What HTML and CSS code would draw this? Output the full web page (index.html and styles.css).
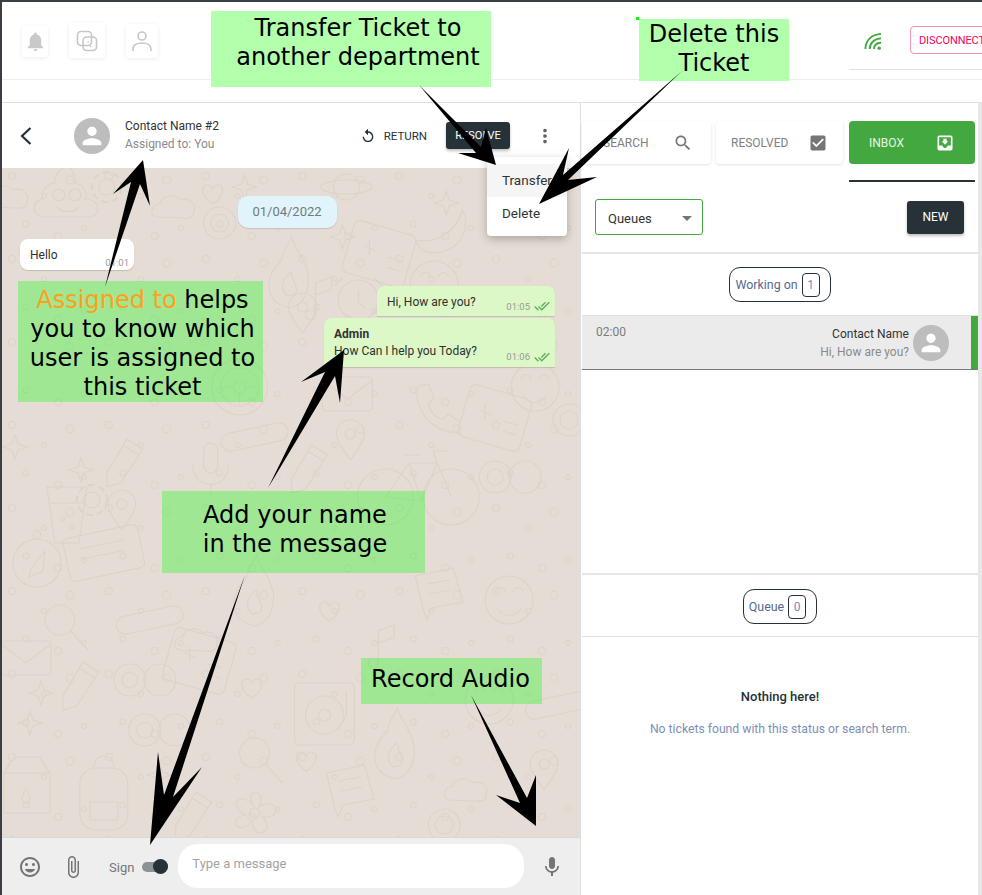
FILE: index.html
```html
<!DOCTYPE html>
<html lang="en">
<head>
<meta charset="utf-8">
<title>Ticket</title>
<link rel="stylesheet" href="styles.css">
</head>
<body>
<div class="app">
  <header class="topbar">
    <div class="top-icons">
      <span class="card card-bell"><svg class="ic-bell" viewBox="0 0 24 24"><path d="M12 22c1.100 0 2-.9 2-2h-4c0 1.100.89 2 2 2zm6-6v-5c0-3.070-1.640-5.640-4.500-6.320V4c0-.83-.67-1.500-1.500-1.500s-1.500.67-1.500 1.500v.68C7.630 5.360 6 7.920 6 11v5l-2 2v1h16v-1l-2-2z"/></svg></span>
      <span class="card card-copy"><svg class="ic-line" viewBox="0 0 24 24"><rect x="2.500" y="2.500" width="14" height="14" rx="3.500"/><rect x="8" y="8" width="13.500" height="13.500" rx="3.500"/><path d="M13 12.500v1M15 17l1 1"/></svg></span>
      <span class="card card-user"><svg class="ic-line" viewBox="0 0 24 24"><circle cx="12" cy="7" r="4"/><path d="M3 22v-2c0-4 4-6 9-6s9 2 9 6v2"/></svg></span>
    </div>
    <div class="top-right">
      <svg class="ic-signal" viewBox="0 0 20 20"><path d="M1.500 18C1.500 9 8 2.500 18 2"/><path d="M6 18c0-6.500 5-11 12-11.200"/><path d="M10.500 18c0-4 3-6.500 7.500-6.700"/><circle cx="16" cy="17" r="1.800"/></svg>
      <button class="btn-disconnect">DISCONNECT</button>
    </div>
  </header>

  <main class="main">
    <section class="chat">
      <div class="chat-head">
        <svg class="ic-back" viewBox="0 0 14 20"><path d="M11.500 2L3 10l8.500 8"/></svg>
        <span class="avatar"><svg viewBox="0 0 24 24"><path d="M12 12c2.210 0 4-1.790 4-4s-1.790-4-4-4-4 1.790-4 4 1.790 4 4 4zm0 2c-2.670 0-8 1.340-8 4v2h16v-2c0-2.660-5.330-4-8-4z"/></svg></span>
        <div class="who">
          <div class="who-name">Contact Name #2</div>
          <div class="who-sub">Assigned to: You</div>
        </div>
        <div class="head-actions">
          <svg class="ic-return" viewBox="0 0 24 24"><path d="M12 5V1L7 6l5 5V7c3.310 0 6 2.690 6 6s-2.690 6-6 6-6-2.690-6-6H4c0 4.420 3.580 8 8 8s8-3.580 8-8-3.580-8-8-8z"/></svg>
          <span class="return-label">RETURN</span>
          <button class="btn-dark btn-resolve">RESOLVE</button>
          <svg class="ic-more" viewBox="0 0 24 24"><path d="M12 8c1.100 0 2-.9 2-2s-.9-2-2-2-2 .9-2 2 .9 2 2 2zm0 2c-1.100 0-2 .9-2 2s.9 2 2 2 2-.9 2-2-.9-2-2-2zm0 6c-1.100 0-2 .9-2 2s.9 2 2 2 2-.9 2-2-.9-2-2-2z"/></svg>
        </div>
      </div>

      <div class="chat-body">
        <svg class="wallpaper" viewBox="2 168 579 669" preserveAspectRatio="none">
          <defs>
            <pattern id="dots" width="97" height="83" patternUnits="userSpaceOnUse">
              <circle cx="12" cy="10" r="3.500"/><circle cx="44" cy="30" r="2.500"/><circle cx="70" cy="14" r="4"/><circle cx="26" cy="58" r="3"/><circle cx="84" cy="62" r="2.500"/><circle cx="58" cy="70" r="3.500"/>
            </pattern>
            <path id="star" d="M0-12 3-3 12 0 3 3 0 12-3 3-12 0-3-3Z"/>
            <path id="heart" d="M0 11C-14 2-11-9-4-8-2-8-1-6 0-4 1-6 2-8 4-8 11-9 14 2 0 11Z"/>
            <g id="circ"><circle r="16"/><circle r="9"/></g>
            <path id="cloud" d="M-20 10C-28 8-26-3-17-3-15-12-2-14 3-7 12-10 20-4 17 4 18 10 12 12 6 11Z"/>
            <g id="planet"><circle r="13"/><ellipse rx="26" ry="7"/></g>
            <path id="banana" d="M-26 8C-8 12 14 2 20-22 28-8 22 14 0 20-14 23-24 18-26 8Z"/>
            <g id="envelope"><rect x="-25" y="-16" width="50" height="34" rx="4"/><path d="M-25-13 0 6 25-13"/></g>
            <g id="bike"><circle cx="-32" cy="10" r="28"/><circle cx="34" cy="10" r="28"/><path d="M-32 10-8-24 20-24 34 10M-8-24 4 14-32 10M4 14 20-24M-14-32H2M20-24 16-36H30"/></g>
            <g id="player"><rect x="-30" y="-30" width="60" height="62" rx="5"/><circle cy="2" r="19"/><circle cy="2" r="6"/><path d="M22-22V2L14 16"/></g>
            <g id="pack"><rect x="-24" y="-22" width="48" height="62" rx="16"/><path d="M-10-22C-10-38 10-38 10-22M-14 12H14V30H-14Z"/></g>
            <g id="milk"><path d="M-22-10-12-26H14L24-10V30H-22ZM-22-10H24"/><path d="M0 6C-6 14-4 20 0 20S6 14 0 6Z"/></g>
            <g id="flower"><path d="M0-6C-14-26 14-26 4-6 22-18 30 6 8 4 22 20-2 28-3 8-14 24-30 6-9 2-28-8-14-24 0-6Z"/><circle r="5"/></g>
            <g id="pencil"><path d="M-26 16-6-18 10-8-12 26-26 30ZM-10-12 6-2"/></g>
            <g id="mic"><rect x="-7" y="-24" width="14" height="30" rx="7"/><path d="M-18-2C-18 24 18 24 18-2M0 16V30"/></g>
            <g id="phone"><path d="M-14-24-4-26 2-12-4-6C-2 2 4 8 10 10L16 4 28 12 26 22C8 26-22 2-14-24Z"/></g>
            <g id="face"><circle r="24"/><path d="M-12 8C-6 18 6 18 12 8M-14-8C-12-14-6-14-4-8M4-8C6-14 12-14 14-8"/></g>
            <g id="gear"><circle r="8"/><circle r="15" stroke-dasharray="7 4" stroke-width="2"/></g>
            <g id="note"><path d="M-6 18V-14L10-20V-8L-6-2"/><circle cx="-11" cy="18" r="5"/></g>
            <g id="clock"><circle r="20"/><path d="M0-10V2L7 8M-16-22-24-14M16-22 24-14"/></g>
            <g id="pin"><path d="M0 20C-12 4-14-2-14-6A14 14 0 0 1 14-6C14-2 12 4 0 20Z"/><circle cy="-6" r="5"/></g>
            <g id="band"><rect x="-34" y="-9" width="68" height="18" rx="9" transform="rotate(-12)"/><path d="M-18 2h1M-6 0h1M6-2h1M18-4h1"/></g>
            <g id="mag"><circle r="15"/><path d="M11 11 28 30"/></g>
            <g id="cup"><path d="M-20-26H20L12 30H-12ZM-18-10H18"/><circle cx="-4" cy="6" r="2"/><circle cx="5" cy="14" r="2"/></g>
            <g id="wheel"><circle r="28"/><circle r="19"/><circle r="6"/><path d="M-6 0H-19M6 0H19M0 6V19"/></g>
            <g id="card"><rect x="-38" y="-22" width="76" height="44" rx="5" transform="rotate(-12)"/><path d="M-24-4 20-13M-22 6 22-3"/></g>
            <g id="chatb"><path d="M-24-14 14-22 24 12-8 18-12 30-16 20Z"/><path d="M-12-6 10-10M-10 4 12 0"/></g>
            <g id="compass"><circle r="24"/><circle cy="-28" r="4"/><path d="M-6 6 8-12 6 8-8 14Z"/></g>
            <g id="goggles"><circle cx="-14" r="16"/><circle cx="16" r="16"/><circle cx="-14" r="8"/></g>
            <g id="flame"><path d="M0 36C-26 30-26 6-8-12-6-26 2-30 2-36 4-22 24-6 18 16 16 28 8 34 0 36Z"/><path d="M-2 24C-10 18-8 6 2 0 2 10 10 14 6 22Z"/></g>
            <g id="box"><rect x="-32" y="-26" width="64" height="54" rx="6" transform="rotate(16)"/><path d="M-16-8-4-2M-10-14-10 2M8 4 22 8M8 14 20 18"/></g>
            <g id="poop"><path d="M-26 20C-38 14-32 2-24 2-28-8-16-14-12-14-14-24-4-28 2-34 4-26 10-22 8-14 18-12 22-2 18 2 34 2 34 18 24 20Z"/><circle cx="-8" cy="-2" r="6"/><circle cx="8" cy="-2" r="6"/><path d="M-10 10C-4 16 6 16 12 10"/></g>
          </defs>
          <rect class="wp-dots" x="2" y="168" width="579" height="669"/>
          <g class="wp-lines">
            <use href="#poop" x="67" y="197"/><use href="#cloud" x="10" y="197"/><use href="#gear" x="107" y="187"/><use href="#cloud" x="177" y="207"/><use href="#heart" x="213" y="193"/><use href="#star" x="245" y="187"/><use href="#planet" x="347" y="187"/><use href="#star" x="447" y="203"/><use href="#banana" x="443" y="232"/><use href="#circ" x="220" y="223"/><use href="#star" x="343" y="237"/><use href="#box" x="380" y="253"/>
            <use href="#flame" x="290" y="272"/><use href="#face" x="435" y="285"/><use href="#note" x="322" y="297"/><use href="#clock" x="359" y="300"/><use href="#pin" x="303" y="313"/><use href="#wheel" x="240" y="387"/><use href="#envelope" x="348" y="393"/><use href="#phone" x="433" y="410"/><use href="#face" x="536" y="387"/><use href="#box" x="496" y="417"/><use href="#circ" x="570" y="420"/><use href="#band" x="255" y="437"/><use href="#pin" x="351" y="440"/><use href="#pencil" x="133" y="457"/><use href="#pencil" x="318" y="463"/><use href="#mic" x="211" y="467"/><use href="#bike" x="418" y="487"/><use href="#goggles" x="510" y="477"/><use href="#star" x="81" y="470"/><use href="#star" x="15" y="447"/><use href="#cup" x="67" y="513"/><use href="#gear" x="92" y="500"/><use href="#pin" x="122" y="510"/><use href="#compass" x="37" y="563"/><use href="#card" x="104" y="553"/><use href="#flame" x="255" y="590"/><use href="#chatb" x="440" y="590"/><use href="#heart" x="330" y="610"/><use href="#face" x="510" y="600"/><use href="#band" x="150" y="620"/><use href="#mag" x="60" y="620"/><use href="#note" x="385" y="645"/><use href="#cloud" x="200" y="640"/><use href="#envelope" x="26" y="657"/><use href="#pencil" x="89" y="680"/><use href="#goggles" x="144" y="680"/><use href="#box" x="200" y="660"/><use href="#heart" x="252" y="687"/><use href="#player" x="325" y="713"/><use href="#star" x="41" y="693"/><use href="#star" x="30" y="723"/><use href="#flame" x="396" y="743"/><use href="#goggles" x="159" y="730"/><use href="#milk" x="26" y="783"/><use href="#pack" x="104" y="790"/><use href="#mag" x="255" y="753"/><use href="#heart" x="307" y="760"/><use href="#chatb" x="351" y="787"/><use href="#flower" x="255" y="813"/><use href="#pencil" x="202" y="810"/><use href="#pin" x="545" y="770"/><use href="#face" x="490" y="700"/><use href="#band" x="560" y="705"/><use href="#cloud" x="470" y="790"/><use href="#circ" x="445" y="825"/><use href="#star" x="160" y="775"/>
          </g>
        </svg>

        <div class="date-chip">01/04/2022</div>
        <div class="bubble bubble-in"><span>Hello</span><time class="stamp">01:01</time></div>
        <div class="bubble bubble-out bubble-one">
          <span>Hi, How are you?</span>
          <span class="meta"><time>01:05</time><svg class="ic-done" viewBox="0 0 24 24"><path d="M18 7l-1.410-1.410-6.340 6.340 1.410 1.410L18 7zm4.240-1.410L11.660 16.170 7.480 12l-1.410 1.410L11.660 19l12-12-1.420-1.410zM.41 13.410L6 19l1.410-1.410L1.830 12 .41 13.410z"/></svg></span>
        </div>
        <div class="bubble bubble-out bubble-two">
          <strong class="sender">Admin</strong>
          <span>How Can I help you Today?</span>
          <span class="meta"><time>01:06</time><svg class="ic-done" viewBox="0 0 24 24"><path d="M18 7l-1.410-1.410-6.340 6.340 1.410 1.410L18 7zm4.240-1.410L11.660 16.170 7.480 12l-1.410 1.410L11.660 19l12-12-1.420-1.410zM.41 13.410L6 19l1.410-1.410L1.830 12 .41 13.410z"/></svg></span>
        </div>
      </div>

      <footer class="composer">
        <svg class="ic-foot" viewBox="0 0 24 24"><path d="M11.990 2C6.470 2 2 6.480 2 12s4.470 10 9.990 10C17.520 22 22 17.520 22 12S17.520 2 11.990 2zM12 20c-4.420 0-8-3.580-8-8s3.580-8 8-8 8 3.580 8 8-3.580 8-8 8zm3.500-9c.83 0 1.500-.67 1.500-1.500S16.330 8 15.500 8 14 8.670 14 9.500s.67 1.500 1.500 1.500zm-7 0c.83 0 1.500-.67 1.500-1.500S9.330 8 8.500 8 7 8.670 7 9.500 7.670 11 8.500 11zm3.500 6.500c2.330 0 4.310-1.460 5.110-3.500H6.890c.8 2.040 2.780 3.500 5.110 3.500z"/></svg>
        <svg class="ic-foot ic-clip" viewBox="0 0 24 24"><path d="M16.500 6v11.500c0 2.210-1.790 4-4 4s-4-1.790-4-4V5c0-1.380 1.120-2.500 2.500-2.500s2.500 1.120 2.500 2.500v10.500c0 .55-.45 1-1 1s-1-.45-1-1V6H10v9.500c0 1.380 1.120 2.500 2.500 2.500s2.500-1.120 2.500-2.500V5c0-2.210-1.790-4-4-4S7 2.790 7 5v12.500c0 3.040 2.460 5.500 5.500 5.500s5.500-2.460 5.500-5.500V6h-1.500z"/></svg>
        <span class="sign">Sign</span>
        <span class="switch"><span class="switch-knob"></span></span>
        <div class="msg-input">Type a message</div>
        <svg class="ic-foot ic-mic" viewBox="0 0 24 24"><path d="M12 14c1.660 0 2.990-1.340 2.990-3L15 5c0-1.660-1.340-3-3-3S9 3.340 9 5v6c0 1.660 1.340 3 3 3zm5.300-3c0 3-2.540 5.100-5.300 5.100S6.700 14 6.700 11H5c0 3.410 2.720 6.230 6 6.720V21h2v-3.280c3.280-.48 6-3.300 6-6.720h-1.700z"/></svg>
      </footer>
    </section>

    <aside class="panel">
      <div class="tabs">
        <div class="tab tab-search"><span>SEARCH</span><svg viewBox="0 0 24 24"><path d="M15.500 14h-.79l-.28-.27C15.410 12.590 16 11.110 16 9.500 16 5.910 13.090 3 9.500 3S3 5.910 3 9.500 5.910 16 9.500 16c1.610 0 3.090-.59 4.230-1.570l.27.28v.79l5 4.990L20.490 19l-4.990-5zm-6 0C7.010 14 5 11.990 5 9.500S7.010 5 9.500 5 14 7.010 14 9.500 11.990 14 9.500 14z"/></svg></div>
        <div class="tab tab-resolved"><span>RESOLVED</span><svg viewBox="0 0 24 24"><path d="M19 3H5c-1.110 0-2 .9-2 2v14c0 1.100.89 2 2 2h14c1.110 0 2-.9 2-2V5c0-1.100-.89-2-2-2zm-9 14l-5-5 1.410-1.410L10 14.170l7.590-7.590L19 8l-9 9z"/></svg></div>
        <div class="tab tab-inbox"><span>INBOX</span><svg viewBox="0 0 24 24"><path d="M19 3H4.990c-1.110 0-1.980.9-1.980 2L3 19c0 1.100.88 2 1.990 2H19c1.100 0 2-.9 2-2V5c0-1.100-.9-2-2-2zm0 12h-4c0 1.660-1.350 3-3 3s-3-1.340-3-3H4.990V5H19v10zm-3-5h-2V7h-4v3H8l4 4 4-4z"/></svg></div>
      </div>
      <div class="tab-rule"></div>
      <div class="filters">
        <div class="select"><span>Queues</span><i class="caret"></i></div>
        <button class="btn-dark btn-new">NEW</button>
      </div>

      <div class="list-working">
        <div class="list-title list-title-work"><div class="pill">Working on <b class="count">1</b></div></div>
        <div class="ticket">
          <span class="ticket-time">02:00</span>
          <div class="ticket-text">
            <div class="ticket-name">Contact Name</div>
            <div class="ticket-msg">Hi, How are you?</div>
          </div>
          <span class="avatar"><svg viewBox="0 0 24 24"><path d="M12 12c2.210 0 4-1.790 4-4s-1.790-4-4-4-4 1.790-4 4 1.790 4 4 4zm0 2c-2.670 0-8 1.340-8 4v2h16v-2c0-2.660-5.330-4-8-4z"/></svg></span>
        </div>
      </div>

      <div class="list-queue">
        <div class="list-title list-title-ruled"><div class="pill">Queue <b class="count">0</b></div></div>
        <div class="empty">
          <div class="empty-title">Nothing here!</div>
          <div class="empty-sub">No tickets found with this status or search term.</div>
        </div>
      </div>
    </aside>
  </main>

  <div class="menu">
    <div class="menu-item menu-active">Transfer</div>
    <div class="menu-item">Delete</div>
  </div>

  <div class="note note-transfer"><span>Transfer Ticket to<br>another department</span></div>
  <div class="note note-delete"><span>Delete this<br>Ticket</span></div>
  <div class="note note-assigned"><span><em>Assigned to</em> helps<br>you to know which<br>user is assigned to<br>this ticket</span></div>
  <div class="note note-name"><span>Add your name<br>in the message</span></div>
  <div class="note note-audio"><span>Record Audio</span></div>
  <i class="speck"></i>

  <svg class="arrows" viewBox="0 0 982 895">
    <polygon points="143,160 113,194 131,182 105,287 140,184 150,206"/>
    <polygon points="496,165 458,153 476,153 419,85 481,147 486,128"/>
    <polygon points="539,204 569,148 563,175 682,71 568,180 597,177"/>
    <polygon points="344,350 301,382 325,372 268,488 335,376 340,403"/>
    <polygon points="150,845 158,752 164,795 245,575 173,797 202,767"/>
    <polygon points="536,826 496,795 520,803 471,695 527,798 536,775"/>
  </svg>
</div>
</body>
</html>
```

FILE: styles.css
```css
* { box-sizing: border-box; }
html, body { margin: 0; height: 100%; }
body { background: #fff; font-family: "Roboto", "Liberation Sans", sans-serif; color: #263238; overflow: hidden; }
.app { position: relative; width: 982px; height: 895px; overflow: hidden; border-top: 2px solid #3a3f45; border-left: 2px solid #3a3f45; background: #fff; }

/* top bar */
.topbar { display: flex; justify-content: space-between; height: 78px; border-bottom: 1px solid #eeeeee; }
.top-icons { display: flex; align-items: flex-start; padding: 21px 0 0 20px; }
.card { display: flex; align-items: center; justify-content: center; border-radius: 3px; background: #fff; box-shadow: 0 1px 4px rgba(0,0,0,.08); }
.card-bell { width: 26px; height: 31px; margin-top: 3px; }
.card-copy { width: 36px; height: 35px; margin-left: 21px; }
.card-user { width: 32px; height: 34px; margin-left: 21px; margin-top: 1px; }
.ic-bell { width: 23px; height: 23px; fill: #c9c9c9; }
.ic-line { width: 24px; height: 24px; fill: none; stroke: #c6c6c6; stroke-width: 1.600; }
.top-right { display: flex; flex: none; align-items: flex-start; width: 133px; height: 68px; border-bottom: 1px solid #e0e0e0; padding-top: 24px; }
.ic-signal { flex: none; width: 19px; height: 19px; margin: 6px 0 0 15px; fill: none; stroke: #43a83f; stroke-width: 1.900; }
.ic-signal circle { fill: #43a83f; stroke: none; }
.btn-disconnect { flex: none; width: 90px; height: 28px; margin-left: 27px; padding: 0 0 0 8px; text-align: left; font: 400 11px "Roboto", sans-serif; letter-spacing: -.1px; color: #f50057; background: #fff; border: 1px solid #f78fb0; border-radius: 4px; }

/* main */
.main { display: flex; height: 793px; margin-top: 22px; }
.chat { display: flex; flex-direction: column; width: 579px; flex: none; background: #e5ddd5; border-top: 1px solid #e0e0e0; border-right: 1px solid #e0e0e0; }
.chat-head { display: flex; align-items: center; height: 65px; flex: none; padding-left: 17px; background: #fff; }
.ic-back { width: 14px; height: 20px; fill: none; stroke: #263238; stroke-width: 2.200; }
.avatar { display: flex; flex: none; width: 36px; height: 36px; border-radius: 50%; background: #bdbdbd; align-items: center; justify-content: center; }
.avatar svg { width: 28px; height: 28px; fill: #fff; }
.chat-head .avatar { margin-left: 41px; }
.who { margin-left: 15px; padding-bottom: 2px; font-size: 12px; line-height: 18px; }
.who-name { color: #333; }
.who-sub { color: #8b8b8b; }
.head-actions { display: flex; align-items: center; margin-left: auto; }
.ic-return { width: 16px; height: 16px; fill: #263238; }
.return-label { margin-left: 8px; font-size: 11.500px; color: #263238; font-weight: 400; }
.btn-dark { border: 0; border-radius: 3px; background: #263238; color: #fff; font-family: "Roboto", sans-serif; font-weight: 400; box-shadow: 0 2px 3px rgba(0,0,0,.25); }
.btn-resolve { width: 64px; height: 27px; margin-left: 19px; padding: 0; font-size: 11px; }
.ic-more { width: 22px; height: 22px; margin: 0 24px 0 24px; fill: #5f6368; }

/* chat body */
.chat-body { position: relative; flex: 1; display: flex; flex-direction: column; min-height: 0; overflow: hidden; }
.wallpaper { position: absolute; inset: 0; width: 100%; height: 100%; }
.wp-dots { fill: url(#dots); }
#dots circle { fill: none; stroke: #dcd4cb; stroke-width: 1.100; }
.wp-lines { fill: none; stroke: #dcd4cb; stroke-width: 1.200; }
.date-chip { position: relative; align-self: center; width: 99px; height: 32px; margin: 28px 8px 0 0; border-radius: 10px; background: #e1f3fb; color: #6f7a80; font-size: 13px; line-height: 32px; text-align: center; box-shadow: 0 1px 1px rgba(0,0,0,.13); }
.bubble { position: relative; font-size: 12px; color: #303030; box-shadow: 0 1px 1px rgba(0,0,0,.15); }
.bubble-in { align-self: flex-start; width: 114px; height: 31px; margin: 11px 0 0 18px; padding: 9px 0 0 10px; background: #fff; border-radius: 8px; }
.bubble-out { align-self: flex-end; margin-right: 25px; background: #dcf8c6; border-radius: 8px 8px 0 0; }
.bubble-one { width: 178px; height: 30px; margin-top: 16px; padding: 9px 0 0 10px; }
.bubble-two { display: flex; flex-direction: column; width: 231px; height: 49px; margin-top: 2px; padding: 8px 0 0 10px; line-height: 17px; }
.sender { font-weight: 700; font-size: 12px; color: #333; }
.stamp, .meta time { font-size: 9.500px; color: #999; }
.stamp { position: absolute; right: 5px; bottom: 2px; }
.meta { position: absolute; right: 5px; bottom: 2px; display: flex; align-items: center; gap: 4px; }
.ic-done { width: 16px; height: 16px; fill: #5fae5c; }

/* composer */
.composer { display: flex; align-items: center; flex: none; height: 58px; padding-left: 16px; background: #eeeeee; border-top: 1px solid #d8d8d8; }
.ic-foot { width: 24px; height: 24px; flex: none; fill: #757575; }
.ic-clip { margin-left: 19px; }
.sign { margin-left: 24px; margin-top: 1px; font-size: 13px; color: #777; }
.switch { position: relative; width: 26px; height: 10px; margin-left: 8px; border-radius: 5px; background: #8d9296; }
.switch-knob { position: absolute; right: 0; top: -3px; width: 15px; height: 15px; border-radius: 50%; background: #263238; }
.msg-input { width: 346px; height: 44px; margin: -1px 0 0 10px; padding: 12px 0 0 14px; border-radius: 20px; background: #fff; color: #a3a3a3; font-size: 13px; }
.ic-mic { margin-left: 16px; }

/* right panel */
.panel { width: 400px; margin-left: 1px; flex: none; background: #fff; border-top: 1px solid #e0e0e0; border-right: 4px solid #e8e8e8; display: flex; flex-direction: column; }
.tabs { display: flex; gap: 5px; height: 43px; margin-top: 18px; }
.tab { display: flex; align-items: center; justify-content: space-between; height: 43px; border-radius: 4px; font-size: 12px; color: #7f7f7f; box-shadow: 0 1px 3px rgba(0,0,0,.12); }
.tab svg { width: 20px; height: 20px; }
.tab-search { width: 129px; padding: 0 18px 0 21px; }
.tab-search svg { fill: #757575; }
.tab-resolved { width: 127px; padding: 0 15px 0 15px; }
.tab-resolved svg { fill: #757575; }
.tab-inbox { width: 126px; margin-left: 1px; padding: 0 20px; background: #43a83f; color: #e8f5e4; box-shadow: none; }
.tab-inbox svg { fill: #fff; }
.tab-rule { align-self: flex-end; width: 126px; height: 2px; margin: 16px 3px 0 0; background: #263238; }
.filters { display: flex; flex: none; justify-content: space-between; align-items: center; height: 72px; padding: 0 14px 0 13px; border-bottom: 2px solid #e6e6e6; }
.select { display: flex; align-items: center; justify-content: space-between; width: 108px; height: 36px; padding: 2px 10px 0 12px; border: 1px solid #43a83f; border-radius: 3px; font-size: 13px; color: #333; }
.caret { width: 0; height: 0; border: 5px solid transparent; border-top-color: #757575; border-bottom: 0; }
.btn-new { width: 57px; height: 33px; padding: 0; font-size: 12px; }
.list-working { flex: none; height: 321px; border-bottom: 2px solid #e6e6e6; }
.list-title { display: flex; justify-content: center; padding-top: 14px; height: 62px; }
.list-title-work { height: 61px; padding-top: 13px; }
.pill { display: flex; align-items: center; gap: 4px; height: 35px; padding: 0 10px 0 5px; border: 1px solid #263238; border-radius: 11px; font-size: 12.400px; color: #566a8f; }
.count { display: flex; align-items: center; justify-content: center; min-width: 18px; height: 24px; font-weight: 400; font-size: 12px; color: #6f8cc0; border: 1px solid #263238; border-radius: 4px; }
.ticket { position: relative; display: flex; align-items: center; height: 55px; padding: 0 29px 0 14px; background: #ebebeb; border-bottom: 1px solid #777; border-top: 1px solid #e0e0e0; }
.ticket::after { content: ""; position: absolute; right: 0; top: 0; bottom: 0; width: 7px; background: #43a83f; }
.ticket-time { align-self: flex-start; margin-top: 9px; font-size: 12px; color: #7b7b7b; }
.ticket-text { margin-left: auto; margin-right: 4px; text-align: right; font-size: 12px; line-height: 18px; }
.ticket-name { color: #333; }
.ticket-msg { color: #8a8a8a; }
.list-title-ruled { height: 62px; border-bottom: 1px solid #e0e0e0; }
.empty { padding-top: 50px; text-align: center; }
.empty-title { font-size: 13px; font-weight: 500; color: #263238; line-height: 19px; }
.empty-sub { margin-top: 14px; font-size: 12.200px; color: #7d8fb5; line-height: 18px; }

/* context menu */
.menu { position: absolute; left: 485px; top: 155px; width: 80px; height: 79px; padding-top: 7px; background: #fff; border-radius: 4px; box-shadow: 0 3px 10px rgba(0,0,0,.25); font-size: 13.500px; color: #333; }
.menu-item { height: 33px; padding: 8px 0 0 15px; }
.menu-active { background: #f5f5f5; }

/* annotations */
.note { position: absolute; display: flex; align-items: center; justify-content: center; text-align: center; font: 24px/29px "DejaVu Sans", sans-serif; color: #000; background: rgba(0,255,0,.3); }
.note em { font-style: normal; color: #ff9f1c; }
.note-transfer { left: 209px; top: 9px; width: 280px; height: 76px; padding: 0 0 12px 14px; background: #b2ffac; }
.note-delete { left: 637px; top: 17px; width: 150px; height: 62px; padding-bottom: 2px; background: #b2ffac; }
.note-assigned { left: 16px; top: 279px; width: 245px; height: 121px; padding: 4px 0 0 4px; }
.note-name { left: 160px; top: 489px; width: 263px; height: 82px; padding: 0 0 5px 3px; }
.note-audio { left: 359px; top: 656px; width: 181px; height: 46px; padding: 0 2px 4px 0; }
.speck { position: absolute; left: 634px; top: 15px; width: 3px; height: 3px; background: #00ff00; }
.arrows { position: absolute; left: -2px; top: -2px; width: 982px; height: 895px; pointer-events: none; }
.arrows polygon { fill: #000; }
```
